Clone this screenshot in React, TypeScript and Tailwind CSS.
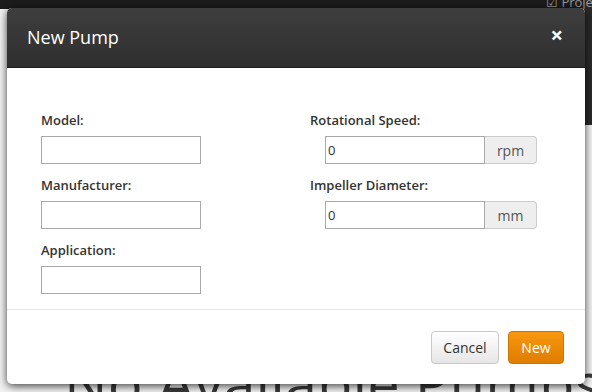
const font = { fontFamily: '"Open Sans", "Liberation Sans", sans-serif' };

const leftFields = ['Model:', 'Manufacturer:', 'Application:'];

const rightFields = [
  { label: 'Rotational Speed:', unit: 'rpm' },
  { label: 'Impeller Diameter:', unit: 'mm' },
];

const App = () => {
  return (
    <div style={font} className="relative w-[592px] h-[392px] overflow-hidden bg-[#f2f2f2]">
      {/* page behind the dialog */}
      <div className="absolute left-0 top-0 w-full h-[9px] bg-[#1c1c1c]" />
      <div className="absolute right-0 top-0 w-[8px] h-[125px] bg-[#2a2a2a]" />
      <div className="absolute left-[546px] top-[-7px] text-[13px] text-[#9a9a9a] whitespace-nowrap">☑ Projects</div>
      <div className="absolute left-[64px] top-[354px] text-[58px] leading-none text-[#3a3a3a] whitespace-nowrap">
        No Available Pumps
      </div>

      {/* dialog */}
      <div className="absolute left-[7px] top-[8px] w-[578px] h-[376px] flex flex-col bg-white rounded-[5px] shadow-[0_2px_8px_rgba(0,0,0,0.75)] overflow-hidden">
        <div className="h-[60px] shrink-0 flex items-center justify-between pl-[20px] pr-[22px] bg-gradient-to-b from-[#3e3e3e] to-[#2f2f2f] border-b border-[#1e1e1e]">
          <h3 className="text-[18px] text-white leading-none -mt-[2px]">New Pump</h3>
          <span className="text-[22px] font-bold text-white leading-none -mt-[8px]">×</span>
        </div>

        <div className="grid grid-cols-[269px_1fr] pl-[34px] pt-[43px] pb-[15px] border-b border-[#e5e5e5]">
          <div className="flex flex-col gap-[12px]">
            {leftFields.map((label) => (
              <div key={label} className="flex flex-col gap-[7px]">
                <label className="text-[13px] font-semibold text-[#333] leading-[18px]">{label}</label>
                <input className="w-[160px] h-[28px] border border-[#a9a9a9] bg-white outline-none" />
              </div>
            ))}
          </div>
          <div className="flex flex-col gap-[12px]">
            {rightFields.map((f) => (
              <div key={f.label} className="flex flex-col gap-[7px]">
                <label className="text-[13px] font-semibold text-[#333] leading-[18px]">{f.label}</label>
                <div className="ml-[15px] flex h-[28px]">
                  <input
                    defaultValue="0"
                    style={font}
                    className="w-[160px] h-[28px] border border-[#a9a9a9] bg-white px-[2px] text-[13px] text-[#333] outline-none"
                  />
                  <span className="w-[52px] h-[28px] flex items-center justify-center bg-[#eeeeee] border border-l-0 border-[#cccccc] rounded-r-[4px] text-[14px] text-[#555]">
                    {f.unit}
                  </span>
                </div>
              </div>
            ))}
          </div>
        </div>

        <div className="flex justify-end gap-[9px] pt-[21px] pr-[21px]">
          <button
            style={font}
            className="h-[33px] w-[68px] rounded-[4px] border border-[#c8c8c8] bg-gradient-to-b from-white to-[#e6e6e6] text-[14px] text-[#333]"
          >
            Cancel
          </button>
          <button
            style={font}
            className="h-[33px] w-[56px] rounded-[4px] border border-[#d07600] bg-gradient-to-b from-[#f7980f] to-[#df7d00] text-[14px] text-white"
          >
            New
          </button>
        </div>
      </div>
    </div>
  );
};

export default App;
